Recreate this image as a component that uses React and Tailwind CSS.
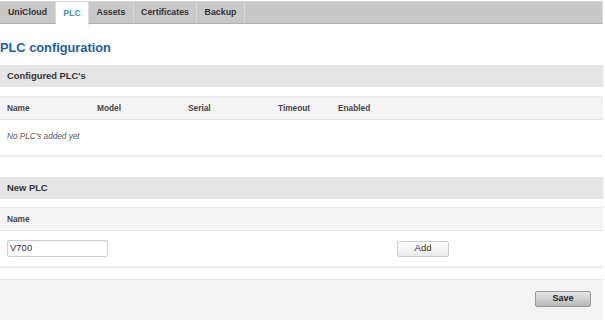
export default function App() {
  const tabs = [
    { label: "UniCloud", w: "w-[56px]" },
    { label: "PLC", w: "w-[33px]", active: true },
    { label: "Assets", w: "w-[45px]" },
    { label: "Certificates", w: "w-[63px]" },
    { label: "Backup", w: "w-[48px]" },
  ];
  return (
    <div className="w-[605px] h-[320px] bg-white font-['Liberation_Sans',Arial,sans-serif] text-[11px] text-[#333] overflow-hidden">
      <div className="w-[603px] pt-[1px]">
        <div className="flex h-[23px] bg-[#c8c8c8] border-t border-[#d4d4d4] border-b border-b-[#b2b2b2] border-r border-r-[#dedede] text-[8.8px]">
          {tabs.map((t) =>
            t.active ? (
              <div
                key={t.label}
                className={`${t.w} h-[23px] -mb-[1px] bg-white border-r border-[#dadada] flex items-center justify-center font-bold text-[#3a8fd8]`}
              >
                {t.label}
              </div>
            ) : (
              <div
                key={t.label}
                className={`${t.w} flex items-center justify-center font-bold text-[#333] border-r border-[#dadada]`}
              >
                {t.label}
              </div>
            )
          )}
        </div>

        <h1 className="mt-[16px] h-[25px] text-[12.8px] leading-[15px] font-bold text-[#1e5ea8]">
          PLC configuration
        </h1>

        <div className="h-[22px] bg-[#e5e5e5] pl-[7px] flex items-center font-bold text-[9.4px]">
          Configured PLC's
        </div>

        <div className="mt-[9px] h-[24px] bg-[#f4f4f4] border-t border-[#ececec] border-b border-b-[#e4e4e4] flex items-center text-[8.3px] font-bold text-[#444]">
          <div className="w-[97px] pl-[7px]">Name</div>
          <div className="w-[91px]">Model</div>
          <div className="w-[90px]">Serial</div>
          <div className="w-[60px]">Timeout</div>
          <div>Enabled</div>
        </div>
        <div className="h-[37px] border-b-2 border-[#ececec] flex items-center pl-[7px] italic text-[8.2px] text-[#555]">
          No PLC's added yet
        </div>

        <div className="mt-[20px] h-[22px] bg-[#e5e5e5] pl-[7px] flex items-center font-bold text-[9.4px]">
          New PLC
        </div>

        <div className="mt-[8px] h-[24px] bg-[#f4f4f4] border-t border-[#ececec] border-b border-b-[#e4e4e4] flex items-center pl-[7px] text-[8.3px] font-bold text-[#444]">
          Name
        </div>
        <div className="h-[37px] border-b-2 border-[#ececec] flex items-center pl-[7px]">
          <div className="w-[390px]">
            <div className="w-[101px] h-[17px] border border-[#cfcfcf] rounded-[2px] flex items-center pl-[2px] text-[9.5px] text-[#333] shadow-[inset_0_1px_1px_rgba(0,0,0,0.05)]">
              V700
            </div>
          </div>
          <div className="w-[52px] h-[16px] border border-[#cbcbcb] rounded-[2px] bg-gradient-to-b from-[#ffffff] to-[#eaeaea] flex items-center justify-center text-[9.5px] text-[#333]">
            Add
          </div>
        </div>

        <div className="mt-[11px] h-[41px] bg-[#f4f4f4] border-t border-[#e6e6e6] flex justify-end pt-[11px] pr-[12px]">
          <div className="w-[56px] h-[16px] border border-[#9a9a9a] rounded-[2px] bg-gradient-to-b from-[#e6e6e6] to-[#b9b9b9] flex items-center justify-center text-[9px] font-bold text-[#222]">
            Save
          </div>
        </div>
      </div>
    </div>
  );
}
